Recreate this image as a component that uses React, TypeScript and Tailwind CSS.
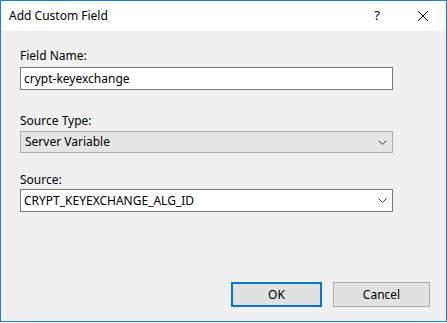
const font = { fontFamily: '"Noto Sans", "Liberation Sans", sans-serif' };

const Chevron = () => (
  <svg width="9" height="5" viewBox="0 0 9 5" className="shrink-0">
    <polyline points="0.5,0.5 4.5,4.5 8.5,0.5" fill="none" stroke="#404040" strokeWidth="1" />
  </svg>
);

const App = () => {
  return (
    <div
      className="w-[447px] h-[322px] border border-[#1883d7] bg-[#f0f0f0] flex flex-col text-[12px] text-black"
      style={font}
    >
      {/* title bar */}
      <div className="h-[30px] bg-white flex items-center shrink-0">
        <div className="pl-[8px] flex-1 leading-4">Add Custom Field</div>
        <div className="w-[46px] h-full flex items-center justify-center text-[13px]">?</div>
        <div className="w-[46px] h-full flex items-center justify-center">
          <svg width="10" height="10" viewBox="0 0 10 10">
            <path d="M0 0 L10 10 M10 0 L0 10" stroke="#000" strokeWidth="1" />
          </svg>
        </div>
      </div>

      <div className="flex-1 flex flex-col pl-[19px] pr-[53px] pt-[17px]">
        <label className="leading-4">Field Name:</label>
        <div className="mt-[3px] h-[23px] border border-[#7a7a7a] bg-white flex items-center px-[3px] leading-4">
          crypt-keyexchange
        </div>

        <label className="mt-[23px] leading-4">Source Type:</label>
        <div className="mt-[2px] h-[22px] border border-[#adadad] bg-[#e5e5e5] flex items-center pl-[4px] pr-[5px] leading-4">
          <span className="flex-1">Server Variable</span>
          <Chevron />
        </div>

        <label className="mt-[19px] leading-4">Source:</label>
        <div className="mt-[1px] h-[23px] border border-[#7a7a7a] bg-white flex items-center pl-[3px] pr-[5px] leading-4">
          <span className="flex-1">CRYPT_KEYEXCHANGE_ALG_ID</span>
          <Chevron />
        </div>

        <div className="mt-auto mb-[14px] flex justify-end gap-[11px] -mr-[37px]">
          <button className="w-[91px] h-[25px] border-2 border-[#0078d7] bg-[#e1e1e1] leading-4">OK</button>
          <button className="w-[97px] h-[25px] border border-[#adadad] bg-[#e1e1e1] leading-4">Cancel</button>
        </div>
      </div>
    </div>
  );
};

export default App;
